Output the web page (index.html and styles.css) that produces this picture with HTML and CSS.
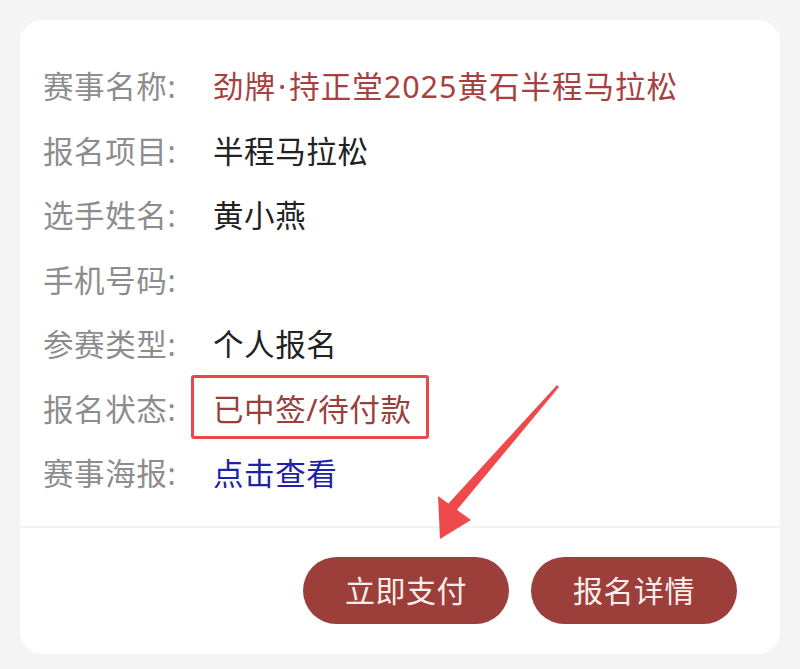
FILE: index.html
```html
<!DOCTYPE html>
<html lang="zh">
<head>
<meta charset="utf-8">
<link rel="stylesheet" href="styles.css">
</head>
<body>
<div class="page">
  <div class="card">
    <div class="info">
      <div class="row"><span class="label">赛事名称:</span><span class="value title">劲牌<span class="dot">·</span>持正堂2025黄石半程马拉松</span></div>
      <div class="row"><span class="label">报名项目:</span><span class="value">半程马拉松</span></div>
      <div class="row"><span class="label">选手姓名:</span><span class="value">黄小燕</span></div>
      <div class="row"><span class="label">手机号码:</span><span class="value"></span></div>
      <div class="row"><span class="label">参赛类型:</span><span class="value">个人报名</span></div>
      <div class="row"><span class="label">报名状态:</span><span class="value status">已中签/待付款</span></div>
      <div class="row"><span class="label">赛事海报:</span><span class="value link">点击查看</span></div>
    </div>
    <div class="actions">
      <button class="btn">立即支付</button>
      <button class="btn">报名详情</button>
    </div>
    <svg class="arrow" width="140" height="170" viewBox="0 0 140 170">
      <polygon points="135,2 137,4 34,128 26,121" fill="#ee4a4c"/>
      <polygon points="18,156 16,113 49,137" fill="#ee4a4c"/>
    </svg>
  </div>
</div>
</body>
</html>
```
FILE: styles.css
```css
html, body {
  margin: 0;
  padding: 0;
  background: #f4f4f4;
}
body {
  font-family: "Noto Sans", "Noto Sans CJK SC", sans-serif;
}
.page {
  padding: 20px 20px 17px 20px;
}
.card {
  position: relative;
  background: #ffffff;
  border-radius: 22px;
  overflow: hidden;
}
.info {
  padding: 34px 0 20px 23px;
}
.row {
  display: grid;
  grid-template-columns: 170px 1fr;
  height: 64.5px;
  align-items: center;
  font-size: 30.5px;
  line-height: 1;
}
.label {
  color: #8d8d8d;
  letter-spacing: 0.6px;
}
.value {
  color: #222222;
  letter-spacing: 0.6px;
}
.title {
  color: #a5423f;
  letter-spacing: 1px;
}
.dot {
  padding: 0 2px;
}
.status {
  color: #9a403c;
  position: relative;
  justify-self: start;
}
.status::after {
  content: "";
  position: absolute;
  left: -22px;
  right: -17px;
  top: -19px;
  bottom: -15px;
  border: 3px solid #e9474a;
  border-radius: 3px;
}
.link {
  color: #1e22a6;
}
.actions {
  border-top: 2px solid #f2f2f2;
  height: 126px;
  display: flex;
  align-items: center;
  justify-content: flex-end;
  gap: 22px;
  padding-right: 43px;
}
.btn {
  width: 206px;
  height: 67px;
  border: none;
  border-radius: 34px;
  background: #9c3f3a;
  color: #fbeeec;
  font-family: "Noto Sans CJK SC", "Noto Sans", sans-serif;
  font-size: 30px;
  line-height: 1;
  letter-spacing: 0.5px;
  padding: 0 0 4px 0;
}
.arrow {
  position: absolute;
  left: 402px;
  top: 363px;
}
```
